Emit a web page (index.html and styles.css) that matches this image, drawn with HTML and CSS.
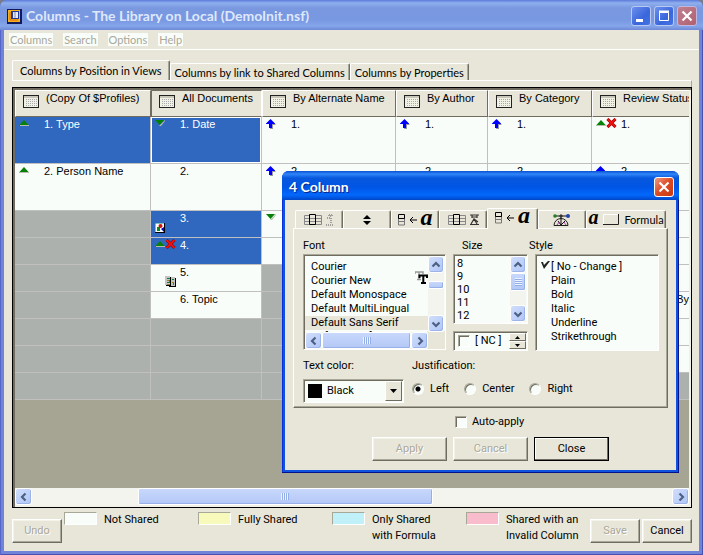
FILE: index.html
```html
<!DOCTYPE html>
<html lang="en">
<head>
<meta charset="utf-8">
<title>Columns - The Library on Local (DemoInit.nsf)</title>
<link rel="stylesheet" href="styles.css">
</head>
<body>
<svg class="defs" aria-hidden="true">
  <symbol id="view" viewBox="0 0 16 13"><path d="M0 0h16v13H0z" fill="#222"/><path d="M1 1h14v11H1z" fill="#f2f1e6"/><path d="M1 1h14v2H1z" fill="#c8c7ba"/><path d="M3 4.500h11M3 6.500h11M3 8.500h11M3 10.500h11" stroke="#aaa" stroke-dasharray="1 1"/></symbol>
  <symbol id="up" viewBox="0 0 10 6"><path d="M0 5.500L5 0l5 5.500z" fill="#078007"/><path d="M1 5.500h9" stroke="#b8bcae"/></symbol>
  <symbol id="down" viewBox="0 0 10 6"><path d="M4 6l6-6v1L6 6z" fill="#b8bcae"/><path d="M0 0h9L4.500 5z" fill="#078007"/></symbol>
  <symbol id="arrow" viewBox="0 0 10 10"><path d="M5 1l5 5H7v4H4z" fill="#999"/><path d="M4.500 0L9 4.500V5H6v4H3V5H0v-.5z" fill="#00f"/></symbol>
  <symbol id="cross" viewBox="0 0 11 10"><path d="M1.500 1l8 8M9.500 1l-8 8" stroke="#700" stroke-width="3"/><path d="M1.500 1l8 8M9.500 1l-8 8" stroke="#f01010" stroke-width="2"/></symbol>
  <symbol id="picture" viewBox="0 0 10 10"><path d="M0 0h10v10H0z" fill="#000"/><path d="M0 0h9v9H0z" fill="#fff"/><path d="M0 0h9M0 0v9" stroke="#078080"/><path d="M2 4h3v4H2z" fill="#0a8a20"/><circle cx="5.500" cy="3" r="2" fill="#d01010"/><path d="M9 4v5L6 6z" fill="#00c"/></symbol>
  <symbol id="book" viewBox="0 0 11 11"><path d="M1 9h3v1H1zM5 1h1v9h4V2h1v9H4V9h1z" fill="#000"/><path d="M0 0h5v9H0zM6 1h4v9H6z" fill="#c4c4c4"/><path d="M2 2.500h3M2 6.500h2M7 3.500h2" stroke="#0a8030"/><path d="M2 4.500h2M2 8.500h3M7 6.500h2" stroke="#a08020"/><path d="M4.500 4v3M8.500 7v2" stroke="#088"/></symbol>
  <symbol id="left" viewBox="0 0 10 10"><path d="M6.500 1.500L3 5l3.500 3.500" fill="none" stroke="#4d6185" stroke-width="2.200"/></symbol>
  <symbol id="right" viewBox="0 0 10 10"><path d="M3.500 1.500L7 5 3.500 8.500" fill="none" stroke="#4d6185" stroke-width="2.200"/></symbol>
  <symbol id="top" viewBox="0 0 10 10"><path d="M1.500 6.500L5 3l3.500 3.500" fill="none" stroke="#4d6185" stroke-width="2.200"/></symbol>
  <symbol id="bottom" viewBox="0 0 10 10"><path d="M1.500 3.500L5 7l3.500-3.500" fill="none" stroke="#4d6185" stroke-width="2.200"/></symbol>
  <symbol id="grid" viewBox="0 0 18 12"><path d="M.5 1.500h17v9H.5zM0 4.500h18M0 7.500h18" fill="none" stroke="#888"/><path d="M5.500.5h6v10h-6z" fill="#e8e6d8" stroke="#000"/><path d="M6 4.500h5M6 7.500h5" stroke="#888"/></symbol>
  <symbol id="stack" viewBox="0 0 8 12"><path d="M.5 4v7h6V4M1 7.500h6" fill="none" stroke="#777"/><path d="M.5.5h6v4h-6z" fill="none" stroke="#000"/></symbol>
  <symbol id="back" viewBox="0 0 7 6"><path d="M0 3h7M3 0L0 3l3 3" fill="none" stroke="#000"/></symbol>
</svg>

<main class="window">
  <header class="titlebar">
    <svg class="app-icon" viewBox="0 0 15 15"><path d="M0 0h15v15H0z" fill="#101a60"/><path d="M1 1h12v12H1z" fill="#f5b020"/><path d="M4 2h8v8H4z" fill="#223a9a"/><path d="M6 3h5v6H6z" fill="#e9eaf2"/><path d="M8 3v6" stroke="#88a"/><path d="M3 3v8h8" fill="none" stroke="#d86a10"/></svg>
    <h1>Columns - The Library on Local (DemoInit.nsf)</h1>
    <button class="caption" aria-label="Minimize"><svg viewBox="0 0 18 18"><path d="M4 12h7v3H4z" fill="#fff"/></svg></button>
    <button class="caption" aria-label="Maximize"><svg viewBox="0 0 18 18"><path d="M4.500 5.500h9v8h-9z" fill="none" stroke="#fff"/><path d="M4 4.500h10" stroke="#fff" stroke-width="2"/></svg></button>
    <button class="caption caption-close muted" aria-label="Close window"><svg viewBox="0 0 18 18"><path d="M4.500 4.500l9 9M13.500 4.500l-9 9" stroke="#fff" stroke-width="2.200"/></svg></button>
  </header>

  <div class="client">
    <nav class="menubar">
      <a href="#columns">Columns</a><a href="#search">Search</a><a href="#options">Options</a><a href="#help">Help</a>
    </nav>
    <div class="tabs" role="tablist">
      <button class="tab active" role="tab" aria-selected="true">Columns by Position in Views</button>
      <button class="tab" role="tab">Columns by link to Shared Columns</button>
      <button class="tab" role="tab">Columns by Properties</button>
    </div>
    <div class="page">
      <section class="pane">
        <div class="sheet">
          <table>
            <colgroup><col class="c1"><col class="c2"><col class="c3"><col class="c4"><col class="c5"><col></colgroup>
            <thead>
              <tr>
                <th><div><svg><use href="#view"/></svg>(Copy Of $Profiles)</div></th>
                <th class="pressed"><div><svg><use href="#view"/></svg>All Documents</div></th>
                <th><div><svg><use href="#view"/></svg>By Alternate Name</div></th>
                <th><div><svg><use href="#view"/></svg>By Author</div></th>
                <th><div><svg><use href="#view"/></svg>By Category</div></th>
                <th><div><svg><use href="#view"/></svg>Review Status</div></th>
              </tr>
            </thead>
            <tbody>
              <tr class="tall">
                <td class="sel"><div><span><svg class="tri"><use href="#up"/></svg></span>1. Type</div></td>
                <td class="sel focus"><div><span><svg class="tri"><use href="#down"/></svg></span>1. Date</div></td>
                <td><div><span><svg class="arr"><use href="#arrow"/></svg></span>1.</div></td>
                <td><div><span><svg class="arr"><use href="#arrow"/></svg></span>1.</div></td>
                <td><div><span><svg class="arr"><use href="#arrow"/></svg></span>1.</div></td>
                <td><div><span><svg class="tri"><use href="#up"/></svg><svg class="cross"><use href="#cross"/></svg></span>1.</div></td>
              </tr>
              <tr class="tall">
                <td><div><span><svg class="tri"><use href="#up"/></svg></span>2. Person Name</div></td>
                <td><div><span></span>2.</div></td>
                <td><div><span><svg class="arr"><use href="#arrow"/></svg></span>2.</div></td>
                <td><div><span></span>2.</div></td>
                <td><div><span></span>2.</div></td>
                <td><div><span><svg class="arr"><use href="#arrow"/></svg></span>2.</div></td>
              </tr>
              <tr>
                <td class="none"></td>
                <td class="sel"><div><span><svg class="pic"><use href="#picture"/></svg></span>3.</div></td>
                <td><div><span><svg class="tri"><use href="#down"/></svg></span></div></td>
                <td></td><td></td><td></td>
              </tr>
              <tr>
                <td class="none"></td>
                <td class="sel"><div><span><svg class="tri"><use href="#up"/></svg><svg class="cross"><use href="#cross"/></svg></span>4.</div></td>
                <td></td><td></td><td></td><td></td>
              </tr>
              <tr>
                <td class="none"></td>
                <td><div><span><svg class="book"><use href="#book"/></svg></span>5.</div></td>
                <td class="none"></td><td class="none"></td><td></td><td></td>
              </tr>
              <tr>
                <td class="none"></td>
                <td><div><span></span>6. Topic</div></td>
                <td class="none"></td><td class="none"></td><td></td><td class="end"><div>By</div></td>
              </tr>
              <tr><td class="none"></td><td class="none"></td><td class="none"></td><td class="none"></td><td></td><td></td></tr>
              <tr><td class="none"></td><td class="none"></td><td class="none"></td><td class="none"></td><td></td><td></td></tr>
              <tr><td class="none"></td><td class="none"></td><td class="none"></td><td class="none"></td><td class="none"></td><td class="none"></td></tr>
            </tbody>
          </table>
        </div>
        <div class="scroll horizontal">
          <button aria-label="Scroll left"><svg><use href="#left"/></svg></button>
          <div class="track"><div class="thumb main-thumb"><i></i></div></div>
          <button aria-label="Scroll right"><svg><use href="#right"/></svg></button>
        </div>
      </section>
    </div>

    <footer class="footer">
      <button class="btn small" disabled>Undo</button>
      <ul class="legend">
        <li><i class="swatch plain"></i><span>Not Shared</span></li>
        <li><i class="swatch yellow"></i><span>Fully Shared</span></li>
        <li><i class="swatch cyan"></i><span>Only Shared<br>with Formula</span></li>
        <li><i class="swatch pink"></i><span>Shared with an<br>Invalid Column</span></li>
      </ul>
      <button class="btn small" disabled>Save</button>
      <button class="btn small">Cancel</button>
    </footer>
  </div>
</main>

<section class="dialog" role="dialog" aria-labelledby="dialog-title">
  <header class="dialog-title">
    <h2 id="dialog-title">4 Column</h2>
    <button class="caption caption-close" aria-label="Close dialog"><svg viewBox="0 0 18 18"><path d="M4.500 4.500l9 9M13.500 4.500l-9 9" stroke="#fff" stroke-width="2.200"/></svg></button>
  </header>
  <div class="dialog-body">
    <div class="prop-tabs" role="tablist">
      <button class="tab" role="tab" aria-label="Column info"><svg class="i18"><use href="#grid"/></svg><svg class="i8" viewBox="0 0 8 12"><path d="M3 0h3v2H3zM1 4h4v6M0 11h8" fill="none" stroke="#888" stroke-dasharray="1 1" stroke-width="1.500"/></svg></button>
      <button class="tab" role="tab" aria-label="Sorting"><svg class="i8" viewBox="0 0 8 12"><path d="M0 5l4-4 4 4zM0 7h8l-4 4z" fill="#000"/></svg></button>
      <button class="tab" role="tab" aria-label="Font"><svg class="i8"><use href="#stack"/></svg><svg class="i7"><use href="#back"/></svg><em>a</em></button>
      <button class="tab" role="tab" aria-label="Number format"><svg class="i18"><use href="#grid"/></svg><svg class="i9" viewBox="0 0 9 11"><path d="M0 1h9M2 3h5M2 1v3M7 1v3M0 10.500h9M1 10l3-5 3 5M4 5l4 3" fill="none" stroke="#333" stroke-width="1.200"/></svg></button>
      <button class="tab active" role="tab" aria-selected="true" aria-label="Title font"><svg class="i8"><use href="#stack"/></svg><svg class="i7"><use href="#back"/></svg><em>a</em></button>
      <button class="tab" role="tab" aria-label="Advanced"><svg class="i18" viewBox="0 0 18 12"><path d="M1 11.500a7 7 0 0 1 14 0z" fill="#e8e6d8" stroke="#222"/><path d="M2 2h13M8 3v8M5 7l3 4 4-4" fill="none" stroke="#111"/><circle cx="2" cy="2" r="1.800" fill="#258025"/><circle cx="15" cy="2" r="2" fill="#2244a8"/><path d="M6 2l2-2 2 2-2 2z" fill="#333"/><path d="M4 11l2-3M11 8l2 3" stroke="#b040b0"/></svg></button>
      <button class="tab formula" role="tab"><em>a</em><svg class="i16" viewBox="0 0 16 11"><path d="M.5 10V.5H15" fill="none" stroke="#fff"/><path d="M0 10.500h15.500V0" fill="none" stroke="#222"/></svg>Formula</button>
    </div>
    <div class="panel">
      <div class="lists">
        <label for="font">Font</label>
        <label class="size-label" for="size">Size</label>
        <label class="style-label" for="style">Style</label>

        <div class="sunken font-box">
          <select id="font" size="5">
            <option>Courier</option>
            <option>Courier New</option>
            <option>Default Monospace</option>
            <option>Default MultiLingual</option>
            <option class="current">Default Sans Serif</option>
            <option>Default Serif</option>
          </select>
          <div class="scroll vertical">
            <button aria-label="Fonts up"><svg><use href="#top"/></svg></button>
            <div class="track"><div class="thumb font-thumb"></div></div>
            <button aria-label="Fonts down"><svg><use href="#bottom"/></svg></button>
          </div>
          <div class="scroll horizontal">
            <button aria-label="Fonts left"><svg><use href="#left"/></svg></button>
            <div class="track"><div class="thumb wide-thumb"><i></i></div></div>
            <button aria-label="Fonts right"><svg><use href="#right"/></svg></button>
          </div>
          <svg class="truetype" viewBox="0 0 13 13"><path d="M0 3V1h8v2M4 1v8M2 8.500h4" fill="none" stroke="#999" stroke-width="1.500"/><path d="M4.500 7V4.500h7.500V7M8.300 4v8M6 12h5" fill="none" stroke="#000" stroke-width="2"/></svg>
        </div>

        <div class="size-col">
          <div class="sunken size-box">
            <select id="size" size="5"><option>8</option><option>9</option><option>10</option><option>11</option><option>12</option></select>
            <div class="scroll vertical">
              <button aria-label="Sizes up"><svg><use href="#top"/></svg></button>
              <div class="track"><div class="thumb size-thumb"><i></i></div></div>
              <button aria-label="Sizes down"><svg><use href="#bottom"/></svg></button>
            </div>
          </div>
          <div class="sunken custom-size">
            <input type="checkbox" id="nc"><label for="nc">[ NC ]</label>
            <div class="spinner">
              <button aria-label="Increase"><svg viewBox="0 0 5 3"><path d="M0 3l2.500-3L5 3z"/></svg></button>
              <button aria-label="Decrease"><svg viewBox="0 0 5 3"><path d="M0 0l2.500 3L5 0z"/></svg></button>
            </div>
          </div>
        </div>

        <div class="sunken style-box">
          <select id="style" size="6"><option>[ No - Change ]</option><option>Plain</option><option>Bold</option><option>Italic</option><option>Underline</option><option>Strikethrough</option></select>
          <svg class="check" viewBox="0 0 9 8"><path d="M0 1h2l1 3 4-4h2L3 8z" fill="#222"/></svg>
        </div>
      </div>

      <div class="options">
        <div>
          <label for="color">Text color:</label>
          <div class="sunken combo">
            <i class="color-chip"></i>
            <select id="color"><option>Black</option></select>
            <span class="drop"><svg viewBox="0 0 7 4"><path d="M0 0h7L3.500 4z"/></svg></span>
          </div>
        </div>
        <fieldset>
          <legend>Justification:</legend>
          <div class="radios">
            <label><input type="radio" name="just" checked>Left</label>
            <label><input type="radio" name="just">Center</label>
            <label><input type="radio" name="just">Right</label>
          </div>
        </fieldset>
      </div>
    </div>
    <div class="auto"><input type="checkbox" id="auto"><label for="auto">Auto-apply</label></div>
    <div class="actions">
      <button class="btn" disabled>Apply</button>
      <button class="btn" disabled>Cancel</button>
      <button class="btn default">Close</button>
    </div>
  </div>
</section>
</body>
</html>
```
FILE: styles.css
```css
* { box-sizing: border-box; }
:root {
  --face: #e8e6d8;
  --paper: #f8fdf9;
  --shade: #a8a898;
  --dark: #706d60;
}
body { margin: 0; background: #7c7c86; color: #000; font: 11px/14px Roboto, "Liberation Sans", sans-serif; }
button, select, input { font: inherit; color: inherit; margin: 0; padding: 0; border: 0; border-radius: 0; background: none; }
svg { display: block; flex: none; }
h1, h2, ul, fieldset { margin: 0; padding: 0; border: 0; min-width: 0; }
.defs { position: absolute; width: 0; height: 0; }

/* main window */
.window { display: flex; flex-direction: column; min-height: 100vh; padding: 0 4px 4px; border-radius: 7px 7px 0 0; background: #6f84d8; box-shadow: inset 1px 0 #5565c8, inset -1px -1px #4a50b0; }
.titlebar { display: flex; align-items: center; gap: 3px; height: 30px; margin: 0 -4px; padding: 2px 6px 0 7px; border-radius: 7px 7px 0 0; background: linear-gradient(#5c7ad8, #8fafef 3px, #7998e0 8px, #7898e2 20px, #84a6ea 26px, #7088d8); }
.titlebar h1 { flex: 1; padding-left: 1px; color: #dfe8fb; font: bold 14px/20px Lato, sans-serif; white-space: nowrap; }
.app-icon { width: 15px; height: 15px; }
.caption { width: 20px; height: 20px; border: 1px solid #b8caf4; border-radius: 3px; background: linear-gradient(135deg, #6c90ec, #3a66dc 60%, #4474e6); }
.caption svg { width: 18px; height: 18px; }
.caption-close { border-color: #fff; background: linear-gradient(135deg, #ee9a80, #dc4a22 50%, #c83a14); }
.caption-close.muted { border-color: #c0b8e0; background: linear-gradient(135deg, #c08090, #b06070); }
.client { flex: 1; display: flex; flex-direction: column; background: var(--face); }
.menubar { display: flex; gap: 10px; height: 20px; padding: 3px 5px; border-bottom: 1px solid #fff; font-family: Lato, sans-serif; line-height: 13px; }
.menubar a { padding: 0 1px; background: var(--paper); color: #aaa899; text-decoration: none; }

.tabs, .prop-tabs { display: flex; align-items: flex-end; }
.tabs { padding: 10px 8px 0; font-family: Lato, sans-serif; }
.tab { position: relative; display: flex; align-items: center; justify-content: center; border: solid; border-width: 1px 1px 0; border-color: #fff var(--dark) #fff #fff; border-radius: 2px 2px 0 0; box-shadow: inset -1px 0 var(--shade); white-space: nowrap; }
.tabs .tab { height: 17px; padding: 1px 4px 0; }
.tabs .tab.active { height: 20px; padding: 0 7px; }
.page { flex: 1; display: flex; flex-direction: column; margin: 0 7px 0 8px; padding-top: 6px; border-top: 1px solid #fff; border-right: 1px solid var(--shade); }
.pane { flex: 1; display: flex; flex-direction: column; border: 1px solid #000; margin-right: -1px; box-shadow: inset 2px 2px var(--dark), inset -2px -2px #f2f1e8; padding: 2px; }
.sheet { flex: 1; overflow: hidden; background: #a6a594; }

table { width: 100%; table-layout: fixed; border-collapse: separate; border-spacing: 0; font: 11px/14px "Liberation Sans", sans-serif; }
.c1 { width: 136px; } .c2 { width: 111px; } .c3 { width: 134px; } .c4 { width: 92px; } .c5 { width: 104px; }
th, td { padding: 0; overflow: hidden; vertical-align: top; white-space: nowrap; }
th { height: 27px; border: solid; border-width: 1px; border-color: #fff var(--dark) var(--dark) #fff; background: var(--face); font-weight: normal; text-align: left; }
th.pressed { border-color: var(--dark) #fff var(--dark) var(--dark); }
th:last-child { border-right: 0; }
th div { display: flex; gap: 7px; padding-left: 7px; }
th svg { width: 16px; height: 13px; margin-top: 4px; }
td { height: 27px; border: solid #c0c0c0; border-width: 0 1px 1px 0; background: var(--paper); }
td:last-child { border-right: 0; }
.tall td { height: 47px; }
td div { display: flex; height: 26px; padding-left: 4px; }
td span { display: flex; align-items: flex-start; flex: none; width: 25px; }
td.sel { background: #3068c0; color: #fff; }
td.focus { box-shadow: inset 0 0 0 1px #fff; }
td.none { background: #adb1ae; }
td.end div { justify-content: flex-end; }
.tri { width: 10px; height: 6px; margin-top: 3px; }
.arr { width: 10px; height: 10px; margin-top: 2px; }
.cross { width: 11px; height: 10px; margin-top: 1px; }
.pic { width: 10px; height: 10px; margin-top: 12px; }
.book { width: 11px; height: 11px; margin: 11px 0 0 10px; }

/* scroll bars */
.scroll { display: flex; background: #f3f4ee; }
.scroll button { display: flex; align-items: center; justify-content: center; flex: none; border: 1px solid #fff; border-radius: 3px; background: linear-gradient(135deg, #d0defc, #b0c6f6); box-shadow: inset -1px -1px #9cb4ea; }
.scroll button svg { width: 10px; height: 10px; }
.horizontal { height: 17px; }
.horizontal button { width: 17px; }
.vertical { flex-direction: column; width: 16px; }
.vertical button { height: 17px; }
.track { flex: 1; min-width: 0; }
.thumb { display: flex; align-items: center; justify-content: center; border: 1px solid #fff; border-radius: 2px; background: linear-gradient(#c8d8fc, #b4c8f6); box-shadow: inset -1px -1px #98b0e8; }
.horizontal .thumb { height: 17px; }
.thumb i { width: 8px; height: 7px; background: repeating-linear-gradient(90deg, #eef4ff 0 1px, #94aee8 1px 2px); }
.main-thumb { width: 46%; margin-left: 16.6%; }

/* footer */
.footer { display: flex; gap: 2px; padding: 4px 7px 7px 8px; }
.btn { width: 75px; height: 24px; border: 1px solid; border-color: #fff var(--dark) var(--dark) #fff; box-shadow: inset -1px -1px var(--shade), inset 1px 1px #f4f3ea; background: var(--face); }
.btn:disabled { color: #aaa899; text-shadow: 1px 1px #fff; }
.btn.default { border-color: #000; box-shadow: inset -1px -1px var(--dark), inset 1px 1px #fff; }
.btn.small { flex: none; width: 50px; margin-top: 7px; }
.legend { flex: 1; display: grid; grid-template-columns: 134fr 134fr 134fr 122fr; list-style: none; }
.legend li { display: flex; gap: 7px; line-height: 16px; white-space: nowrap; }
.swatch { flex: none; width: 33px; height: 13px; border: 1px solid; border-color: var(--shade) #fff #fff var(--shade); }
.plain { background: var(--paper); } .yellow { background: #f8fabc; } .cyan { background: #c0f0f8; } .pink { background: #f8bccc; }

/* floating dialog */
.dialog { position: absolute; left: 282px; top: 171px; width: 397px; padding: 0 3px 3px; border-radius: 7px 7px 0 0; background: #0f52e0; box-shadow: inset -1px -1px #00138c, inset 1px 0 #0831d9; }
.dialog-title { display: flex; align-items: center; justify-content: space-between; height: 29px; margin: 0 -3px; padding: 2px 5px 0 7px; border-radius: 7px 7px 0 0; background: linear-gradient(#0a50d0, #2f86f8 3px, #0858dc 7px, #0055e5 16px, #0268fc 24px, #0046c8); }
.dialog-title h2 { color: #fff; font: bold 14px/20px Lato, sans-serif; text-shadow: 1px 1px #00288c; }
.dialog-body { padding: 8px 8px 9px; background: var(--face); }
.prop-tabs { padding: 0 2px; }
.prop-tabs .tab { width: 48px; height: 18px; gap: 4px; }
.prop-tabs .tab.active { width: 51px; height: 21px; margin-bottom: -1px; padding-bottom: 3px; background: var(--face); }
.prop-tabs .tab.formula { flex: 1; gap: 5px; font-family: Lato, sans-serif; }
.tab em { font: italic bold 24px/14px "Liberation Serif", serif; margin-top: -6px; }
.tab.formula em { font-size: 20px; margin-top: -5px; }
.i18 { width: 18px; height: 12px; } .i16 { width: 16px; height: 11px; } .i9 { width: 9px; height: 11px; } .i8 { width: 8px; height: 12px; } .i7 { width: 7px; height: 6px; }
.panel { padding: 10px 8px 4px 9px; border: 1px solid; border-color: #fff var(--dark) var(--dark) #fff; box-shadow: inset -1px -1px var(--shade); }
.lists { display: grid; grid-template-columns: 143px 75px 1fr; gap: 1px 7px; }
.size-label { padding-left: 9px; }
.style-label { margin-left: -6px; }
.sunken { border: 1px solid; border-color: var(--shade) #fff #fff var(--shade); box-shadow: inset 1px 1px var(--dark); background: var(--paper); padding: 1px; }
.sunken select { appearance: none; outline: 0; overflow: hidden; }
.sunken option { min-height: 14px; padding: 0; line-height: 14px; }
.font-box { position: relative; display: grid; grid-template: 76px 17px / 1fr 16px; height: 96px; background: linear-gradient(var(--face), var(--face)) right bottom / 18px 18px no-repeat var(--paper); }
.font-box > select { height: 76px; padding-top: 4px; }
.font-box option { padding-left: 6px; }
.font-box .current { background: var(--face); }
.truetype { position: absolute; right: 17px; top: 16px; width: 13px; height: 13px; }
.font-thumb { height: 8px; margin-top: 8px; }
.wide-thumb { width: 100%; }
.size-col { display: flex; flex-direction: column; justify-content: space-between; }
.size-box { display: flex; height: 70px; }
.size-box select { flex: 1; height: 66px; padding-top: 1px; }
.size-box option { min-height: 13px; line-height: 13px; padding-left: 2px; }
.size-thumb { height: 18px; }
.size-thumb i { width: 7px; height: 8px; background: repeating-linear-gradient(#eef4ff 0 1px, #94aee8 1px 2px); }
.custom-size { display: flex; align-items: center; gap: 5px; height: 20px; padding-left: 4px; }
.custom-size label { flex: 1; white-space: nowrap; }
.spinner { display: grid; width: 17px; height: 16px; }
.spinner button { display: grid; place-items: center; border: 1px solid; border-color: #fff var(--dark) var(--dark) #fff; background: var(--face); }
.spinner svg { width: 5px; height: 3px; }
.style-box { position: relative; }
.style-box select { width: 100%; height: 92px; padding: 4px 0 0; }
.style-box option { padding-left: 14px; }
.check { position: absolute; left: 5px; top: 6px; width: 9px; height: 8px; }

.options { display: flex; gap: 8px; padding-top: 8px; }
.options > div { width: 101px; }
.options > div > label { display: block; }
.combo { display: flex; align-items: center; height: 24px; margin-top: 6px; padding-left: 4px; }
.color-chip { width: 14px; height: 14px; background: #000; }
.combo select { flex: 1; height: 20px; padding-left: 5px; min-width: 0; }
.drop { display: grid; place-items: center; width: 17px; height: 20px; border: 1px solid; border-color: #fff var(--dark) var(--dark) #fff; background: var(--face); pointer-events: none; }
.drop svg { width: 7px; height: 4px; }
legend { padding: 0; }
.radios { display: flex; gap: 15px; padding-top: 8px; }
.radios label { display: flex; align-items: center; gap: 6px; height: 16px; }
input { appearance: none; width: 12px; height: 12px; background: var(--paper); border: 1px solid; border-color: var(--shade) #fff #fff var(--shade); box-shadow: inset 1px 1px var(--dark); }
input[type="radio"] { border-radius: 50%; }
input[type="radio"]:checked { background: radial-gradient(circle, #000 2px, var(--paper) 3px); }
.auto { display: flex; align-items: center; gap: 5px; height: 14px; margin-top: 7px; padding-left: 162px; }
.actions { display: flex; justify-content: center; gap: 6px; margin-top: 8px; padding-left: 20px; }
```
